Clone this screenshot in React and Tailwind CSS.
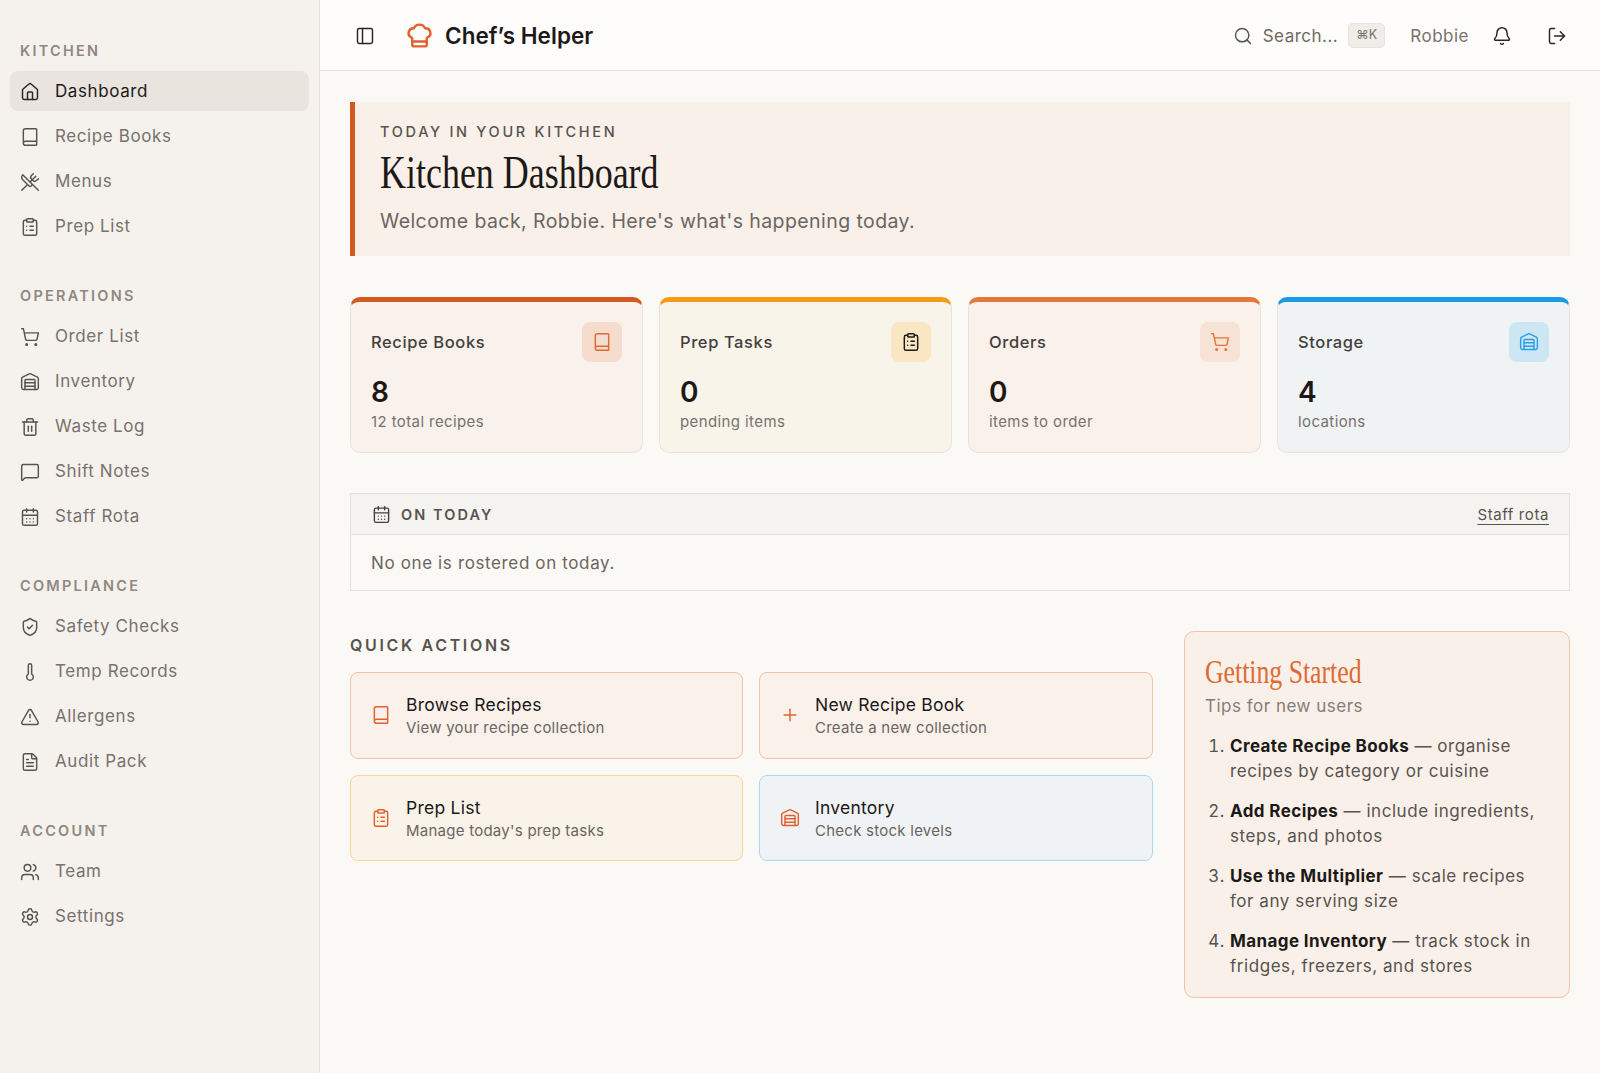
import React from "react";
import {
  PanelLeft, ChefHat, Search, Bell, LogOut, House, Book, UtensilsCrossed, ClipboardList,
  ShoppingCart, Warehouse, Trash2, MessageSquare, CalendarDays, ShieldCheck, Thermometer,
  TriangleAlert, FileText, Users, Settings, Plus,
} from "lucide-react";

const sections = [
  { title: "KITCHEN", items: [[House, "Dashboard", true], [Book, "Recipe Books"], [UtensilsCrossed, "Menus"], [ClipboardList, "Prep List"]] },
  { title: "OPERATIONS", items: [[ShoppingCart, "Order List"], [Warehouse, "Inventory"], [Trash2, "Waste Log"], [MessageSquare, "Shift Notes"], [CalendarDays, "Staff Rota"]] },
  { title: "COMPLIANCE", items: [[ShieldCheck, "Safety Checks"], [Thermometer, "Temp Records"], [TriangleAlert, "Allergens"], [FileText, "Audit Pack"]] },
  { title: "ACCOUNT", items: [[Users, "Team"], [Settings, "Settings"]] },
];

const stats = [
  { title: "Recipe Books", value: "8", sub: "12 total recipes", Icon: Book, card: "bg-[#f9f1eb] border-t-[#d2591f]", box: "bg-[#f5dccd]", icon: "text-[#dd6b33]" },
  { title: "Prep Tasks", value: "0", sub: "pending items", Icon: ClipboardList, card: "bg-[#f9f4ea] border-t-[#f79a17]", box: "bg-[#fae6c3]", icon: "text-[#1c1917]" },
  { title: "Orders", value: "0", sub: "items to order", Icon: ShoppingCart, card: "bg-[#faf1ea] border-t-[#e5773d]", box: "bg-[#f7e2d6]", icon: "text-[#e5773d]" },
  { title: "Storage", value: "4", sub: "locations", Icon: Warehouse, card: "bg-[#eff3f4] border-t-[#1a9be6]", box: "bg-[#cde6f3]", icon: "text-[#2d9fe6]" },
];

const actions = [
  { title: "Browse Recipes", sub: "View your recipe collection", Icon: Book, card: "bg-[#faf1eb] border-[#f2c2a5]" },
  { title: "New Recipe Book", sub: "Create a new collection", Icon: Plus, card: "bg-[#faf1eb] border-[#f2c2a5]" },
  { title: "Prep List", sub: "Manage today's prep tasks", Icon: ClipboardList, card: "bg-[#faf3e9] border-[#fad592]" },
  { title: "Inventory", sub: "Check stock levels", Icon: Warehouse, card: "bg-[#eff3f5] border-[#a9d9f2]" },
];

const tips = [
  ["Create Recipe Books", " — organise recipes by category or cuisine"],
  ["Add Recipes", " — include ingredients, steps, and photos"],
  ["Use the Multiplier", " — scale recipes for any serving size"],
  ["Manage Inventory", " — track stock in fridges, freezers, and stores"],
];

function Sidebar() {
  return (
    <aside className="w-[320px] shrink-0 bg-[#f5f2ee] border-r border-[#e6e3df] px-[10px] pt-[40px]">
      {sections.map((s) => (
        <div key={s.title} className="mb-[39px]">
          <div className="h-[21px] pl-[10px] mb-[10px] flex items-center text-[14.5px] font-semibold tracking-[2.25px] text-[#8f8880]">{s.title}</div>
          <nav className="flex flex-col gap-[5px]">
            {s.items.map(([Icon, label, active]) => (
              <a key={label} className={`h-[40px] rounded-lg flex items-center gap-[15px] pl-[10px] pt-[2px] text-[17px] tracking-[0.6px] ${active ? "bg-[#e9e4de] text-[#1c1917]" : "text-[#78716c]"}`}>
                <Icon className={`w-[20px] h-[20px] ${active ? "text-[#292524]" : "text-[#57534e]"}`} strokeWidth={1.75} />
                {label}
              </a>
            ))}
          </nav>
        </div>
      ))}
    </aside>
  );
}

function Header() {
  return (
    <header className="h-[71px] bg-[#fefdfc] border-b border-[#e6e3df] flex items-center pl-[35px] pr-[33px] pt-[1px]">
      <PanelLeft className="w-[20px] h-[20px] text-[#292524]" strokeWidth={1.75} />
      <ChefHat className="ml-[30px] w-[29px] h-[29px] text-[#e2602b]" strokeWidth={2} />
      <span className="ml-[11px] text-[22.5px] font-semibold tracking-[0.05px] text-[#1c1917]">Chef’s Helper</span>
      <div className="ml-auto flex items-center">
        <Search className="w-[20px] h-[20px] text-[#57534e]" strokeWidth={1.75} />
        <span className="ml-[10px] pt-[2px] text-[17px] tracking-[0.5px] text-[#6f6862]">Search...</span>
        <kbd className="ml-[10px] w-[37px] h-[25px] rounded-[5px] bg-[#f0ede9] border border-[#e6e3df] flex items-center justify-center text-[12.5px] font-[Inter,sans-serif] text-[#78716c]">⌘K</kbd>
        <span className="ml-[25px] pt-[2px] text-[17px] tracking-[0.5px] text-[#78716c]">Robbie</span>
        <Bell className="ml-[23px] w-[20px] h-[20px] text-[#292524]" strokeWidth={1.75} />
        <LogOut className="ml-[35px] w-[20px] h-[20px] text-[#292524]" strokeWidth={1.75} />
      </div>
    </header>
  );
}

function Main() {
  return (
    <main className="px-[30px] pt-[31px]">
      <section className="h-[154px] bg-[#f9f0ea] border-l-[5px] border-[#d2591f] pl-[25px] pt-[20px]">
        <div className="text-[14.5px] font-medium leading-[20px] tracking-[2.7px] text-[#57534e]">TODAY IN YOUR KITCHEN</div>
        <h1 className="mt-[6px] h-[48px] text-[47px] leading-[48px] font-[Liberation_Serif,serif] text-[#1c1917] origin-left scale-x-[0.765] whitespace-nowrap">Kitchen Dashboard</h1>
        <p className="mt-[12px] text-[19.5px] leading-[26px] tracking-[0.42px] text-[#6b6560]">Welcome back, Robbie. Here's what's happening today.</p>
      </section>

      <section className="mt-[41px] grid grid-cols-4 gap-[16px]">
        {stats.map((s) => (
          <div key={s.title} className={`h-[156px] rounded-[10px] border border-[#e8e3dd] border-t-[5px] px-[20px] pt-[20px] ${s.card}`}>
            <div className="flex items-center justify-between">
              <span className="text-[16.5px] font-medium tracking-[0.6px] text-[#44403c]">{s.title}</span>
              <div className={`w-[40px] h-[40px] rounded-lg flex items-center justify-center ${s.box}`}>
                <s.Icon className={`w-[20px] h-[20px] ${s.icon}`} strokeWidth={1.75} />
              </div>
            </div>
            <div className="mt-[10px] text-[28px] leading-[40px] font-semibold text-[#1c1917]">{s.value}</div>
            <div className="text-[15px] leading-[20px] tracking-[0.4px] text-[#78716c]">{s.sub}</div>
          </div>
        ))}
      </section>

      <section className="mt-[40px] border border-[#e4e1dc]">
        <div className="h-[41px] bg-[#f5f3f0] border-b border-[#e4e1dc] flex items-center pl-[21px] pr-[20px]">
          <CalendarDays className="w-[19px] h-[19px] text-[#44403c]" strokeWidth={1.75} />
          <span className="ml-[10px] pt-[2px] text-[14.5px] font-semibold tracking-[2.1px] text-[#57534e]">ON TODAY</span>
          <a className="ml-auto pt-[2px] text-[15px] tracking-[0.6px] text-[#57534e] underline underline-offset-4">Staff rota</a>
        </div>
        <div className="h-[55px] pl-[20px] pt-[3px] flex items-center text-[17px] tracking-[0.63px] text-[#6b6560]">No one is rostered on today.</div>
      </section>

      <section className="mt-[40px] grid grid-cols-[803px_386px] gap-[31px] items-start">
        <div>
          <h2 className="h-[27px] flex items-center text-[16px] font-semibold tracking-[2.65px] text-[#57534e]">QUICK ACTIONS</h2>
          <div className="mt-[14px] grid grid-cols-[393px_394px] gap-[16px]">
            {actions.map((a) => (
              <div key={a.title} className={`h-[86.5px] rounded-lg border flex items-center pl-[20px] ${a.card}`}>
                <a.Icon className="w-[20px] h-[20px] text-[#e2602b]" strokeWidth={1.75} />
                <div className="ml-[15px] pt-[1px]">
                  <div className="text-[17.5px] leading-[24px] tracking-[0.25px] text-[#1c1917]">{a.title}</div>
                  <div className="mt-[1px] text-[15px] leading-[20px] tracking-[0.25px] text-[#6b6560]">{a.sub}</div>
                </div>
              </div>
            ))}
          </div>
        </div>
        <div className="h-[367px] rounded-[10px] bg-[#f9f0ea] border border-[#f2c2a5] pl-[20px] pr-[20px] pt-[21px]">
          <h3 className="h-[38px] text-[33px] leading-[38px] font-[Liberation_Serif,serif] text-[#dd6b33] origin-left scale-x-[0.78] whitespace-nowrap">Getting Started</h3>
          <p className="mt-[3px] text-[17px] leading-[24px] tracking-[0.5px] text-[#857d75]">Tips for new users</p>
          <ol className="mt-[16px] list-decimal pl-[25px] flex flex-col gap-[15px] text-[17px] leading-[25px] tracking-[0.55px] text-[#57534e]">
            {tips.map(([b, r]) => (
              <li key={b}><strong className="font-bold tracking-[0.4px] text-[#1c1917]">{b}</strong>{r}</li>
            ))}
          </ol>
        </div>
      </section>
    </main>
  );
}

export default function App() {
  return (
    <div className="w-[1600px] h-[1073px] flex overflow-hidden bg-[#fbf9f5] font-[Inter,sans-serif] antialiased">
      <Sidebar />
      <div className="flex-1 min-w-0">
        <Header />
        <Main />
      </div>
    </div>
  );
}
